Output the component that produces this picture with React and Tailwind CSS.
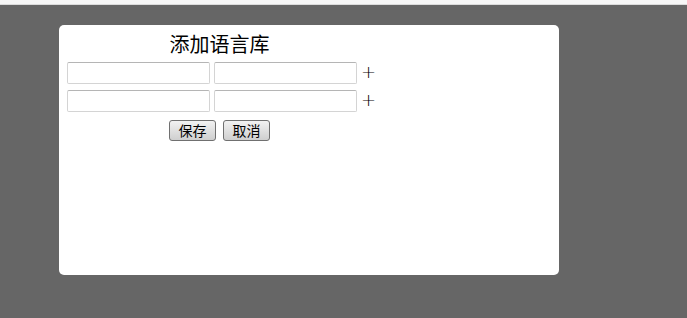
import React from "react";

const font = { fontFamily: '"Liberation Sans", "Noto Sans CJK SC", sans-serif' };

const Row = () => (
  <div className="flex items-center h-[22px]">
    <input className="w-[143px] h-[22px] border border-[#d4d4d4] border-t-[#b5b5b5] rounded-[2px] bg-white outline-none" />
    <input className="ml-[4px] w-[143px] h-[22px] border border-[#d4d4d4] border-t-[#b5b5b5] rounded-[2px] bg-white outline-none" />
    <span className="ml-[4px] -mt-[2px] text-[18px] leading-none text-[#0a0008] cursor-pointer" style={{ fontFamily: '"DejaVu Sans", sans-serif', fontWeight: 300 }}>+</span>
  </div>
);

const Btn = ({ children }) => (
  <button className="h-[21px] w-[47px] text-[14px] leading-none text-black border border-[#707070] rounded-[3px] bg-gradient-to-b from-[#f2f2f2] to-[#cfcfcf]">
    {children}
  </button>
);

export default function App() {
  return (
    <div className="min-h-[318px] bg-[#666666]" style={font}>
      <div className="h-[5px] bg-[#f7f7f7] border-b border-[#dcdcdc]" />
      <div className="ml-[59px] mt-[20px] w-[500px] h-[250px] bg-white rounded-[5px] p-[8px]">
        <div className="inline-flex flex-col items-stretch">
          <h1 className="w-[305px] text-center text-[20px] leading-[24px] h-[29px] text-black">添加语言库</h1>
          <div className="flex flex-col gap-[6px]">
            <Row />
            <Row />
          </div>
          <div className="flex justify-center gap-[7px] mt-[8px] w-[305px]">
            <Btn>保存</Btn>
            <Btn>取消</Btn>
          </div>
        </div>
      </div>
    </div>
  );
}
